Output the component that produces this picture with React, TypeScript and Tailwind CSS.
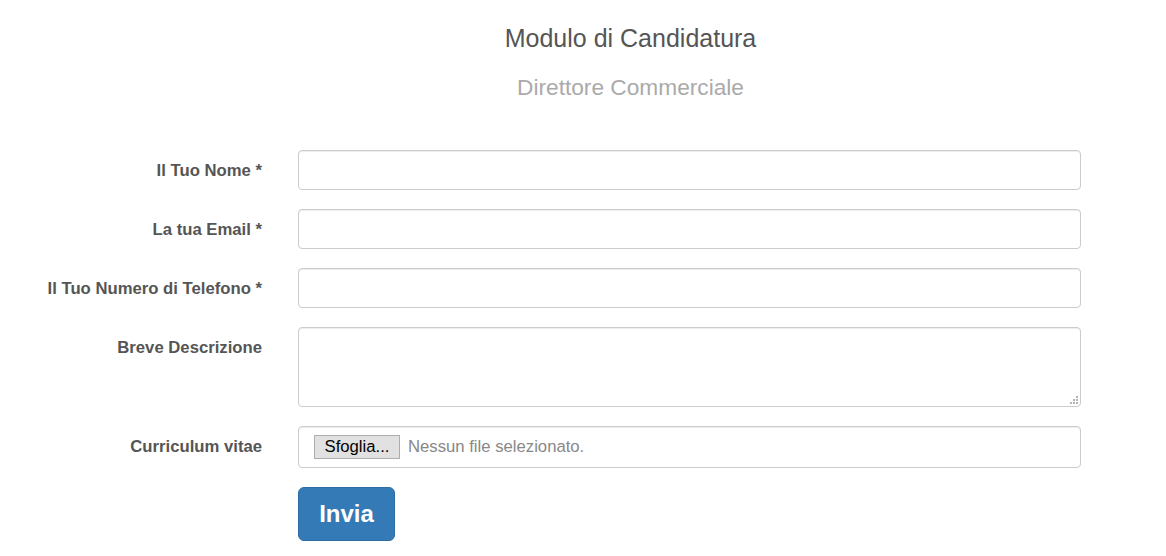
import React from "react";

const labelCls =
  "w-[262px] shrink-0 text-right font-bold text-[16.7px] leading-[20px] pt-[11px] text-[#555]";

function Row({ label, children, mb = true }: { label: string; children: React.ReactNode; mb?: boolean }) {
  return (
    <div className={`flex items-start ${mb ? "mb-[19px]" : ""}`}>
      <div className={labelCls}>{label}</div>
      <div className="ml-[36px] w-[783px]">{children}</div>
    </div>
  );
}

export default function App() {
  const inputCls =
    "block w-full h-[40px] rounded-[4px] border border-[#ccc] bg-white shadow-[inset_0_1px_1px_rgba(0,0,0,0.075)] outline-none";
  return (
    <div
      className="w-[1166px] h-[556px] bg-white overflow-hidden"
      style={{ fontFamily: '"Liberation Sans", Arial, sans-serif' }}
    >
      <div className="ml-[95px] w-[1071px] text-center pt-[22px]">
        <div className="text-[25px] leading-[32px] text-[#555]">Modulo di Candidatura</div>
        <div className="mt-[17px] text-[22.7px] leading-[32px] text-[#aaa]">Direttore Commerciale</div>
      </div>
      <div className="mt-[47px]">
        <Row label="Il Tuo Nome *">
          <input className={inputCls} />
        </Row>
        <Row label="La tua Email *">
          <input className={inputCls} />
        </Row>
        <Row label="Il Tuo Numero di Telefono *">
          <input className={inputCls} />
        </Row>
        <Row label="Breve Descrizione">
          <div className="relative">
            <textarea className="block w-full h-[80px] rounded-[4px] border border-[#ccc] bg-white shadow-[inset_0_1px_1px_rgba(0,0,0,0.075)] outline-none resize-none" />
            <svg className="absolute right-[3px] bottom-[3px]" width="8" height="8" viewBox="0 0 8 8">
              <rect x="6" y="0" width="2" height="2" fill="#b5b5b5" />
              <rect x="3" y="3" width="2" height="2" fill="#b5b5b5" />
              <rect x="6" y="3" width="2" height="2" fill="#b5b5b5" />
              <rect x="0" y="6" width="2" height="2" fill="#b5b5b5" />
              <rect x="3" y="6" width="2" height="2" fill="#b5b5b5" />
              <rect x="6" y="6" width="2" height="2" fill="#b5b5b5" />
            </svg>
          </div>
        </Row>
        <Row label="Curriculum vitae">
          <div className="flex items-center h-[42px] rounded-[4px] border border-[#ccc] bg-white pl-[15px] shadow-[inset_0_1px_1px_rgba(0,0,0,0.075)]">
            <span className="flex items-center justify-center w-[86px] h-[24px] bg-[#e1e1e1] border border-[#adadad] text-black text-[16.7px] leading-[20px]">
              Sfoglia...
            </span>
            <span className="ml-[8px] text-[16.7px] leading-[20px] text-[#888]">Nessun file selezionato.</span>
          </div>
        </Row>
        <Row label="" mb={false}>
          <button className="flex items-center justify-center w-[97px] h-[54px] rounded-[6px] bg-[#337ab7] border border-[#2e6da4] text-white font-bold text-[24px]">
            Invia
          </button>
        </Row>
      </div>
    </div>
  );
}
